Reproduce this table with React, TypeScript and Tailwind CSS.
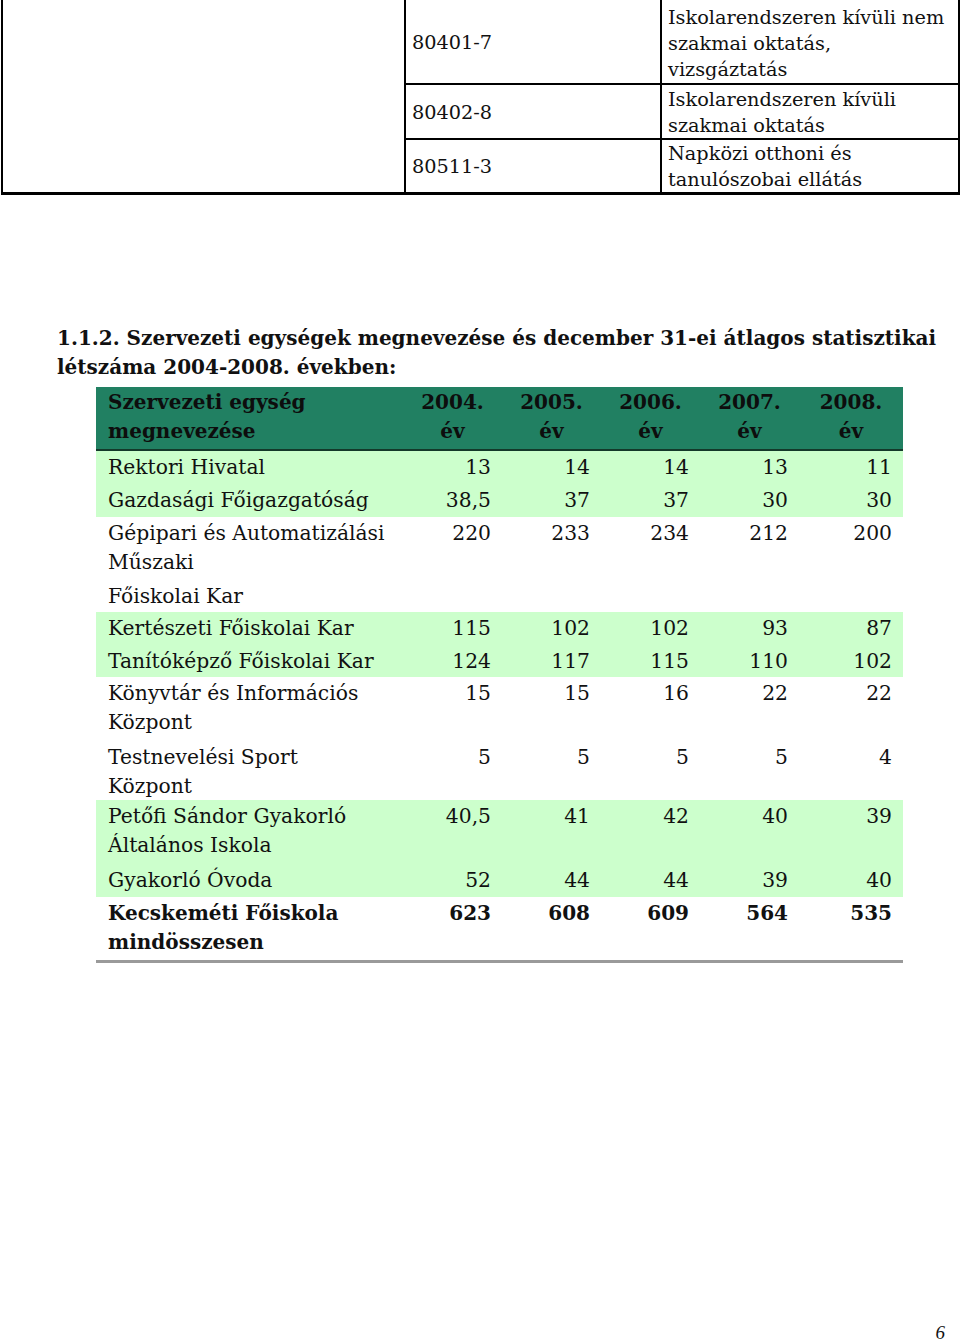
import React from "react";

type Row = {
  name: React.ReactNode;
  vals: string[];
  bg: string;
  h: string;
  bold?: boolean;
};

const rows: Row[] = [
  { name: "Rektori Hivatal", vals: ["13", "14", "14", "13", "11"], bg: "bg-[#ccffcc]", h: "h-[33px]" },
  { name: "Gazdasági Főigazgatóság", vals: ["38,5", "37", "37", "30", "30"], bg: "bg-[#ccffcc]", h: "h-[33px]" },
  {
    name: (
      <>
        Gépipari és Automatizálási
        <br />
        Műszaki
        <div className="mt-[5px]">Főiskolai Kar</div>
      </>
    ),
    vals: ["220", "233", "234", "212", "200"],
    bg: "bg-white",
    h: "h-[95px]",
  },
  { name: "Kertészeti Főiskolai Kar", vals: ["115", "102", "102", "93", "87"], bg: "bg-[#ccffcc]", h: "h-[33px]" },
  { name: "Tanítóképző Főiskolai Kar", vals: ["124", "117", "115", "110", "102"], bg: "bg-[#ccffcc]", h: "h-[32px]" },
  {
    name: (
      <>
        Könyvtár és Információs
        <br />
        Központ
      </>
    ),
    vals: ["15", "15", "16", "22", "22"],
    bg: "bg-white",
    h: "h-[64px]",
  },
  {
    name: (
      <>
        Testnevelési Sport
        <br />
        Központ
      </>
    ),
    vals: ["5", "5", "5", "5", "4"],
    bg: "bg-white",
    h: "h-[59px]",
  },
  {
    name: (
      <>
        Petőfi Sándor Gyakorló
        <br />
        Általános Iskola
      </>
    ),
    vals: ["40,5", "41", "42", "40", "39"],
    bg: "bg-[#ccffcc]",
    h: "h-[64px]",
  },
  { name: "Gyakorló Óvoda", vals: ["52", "44", "44", "39", "40"], bg: "bg-[#ccffcc]", h: "h-[33px]" },
  {
    name: (
      <>
        Kecskeméti Főiskola
        <br />
        mindösszesen
      </>
    ),
    vals: ["623", "608", "609", "564", "535"],
    bg: "bg-white",
    h: "h-[63px]",
    bold: true,
  },
];

const years = ["2004.", "2005.", "2006.", "2007.", "2008."];

export default function App() {
  return (
    <div
      className="flex h-[1343px] w-[960px] flex-col overflow-hidden bg-white text-[#111]"
      style={{ fontFamily: '"DejaVu Serif", "Liberation Serif", serif' }}
    >
      {/* Top table continuation */}
      <div className="ml-[1px] flex w-[959px] border-b-[3px] border-l-2 border-r-2 border-black text-[19.3px] leading-[26px]">
        <div className="w-[403px] border-r-2 border-black" />
        <div className="grid flex-1 grid-cols-[256px_1fr]">
          <div className="flex h-[85px] items-center border-b-2 border-r-2 border-black pl-[6px] pt-[3px]">80401-7</div>
          <div className="flex h-[85px] items-center whitespace-nowrap border-b-2 border-black pl-[6px] pt-[4px]">
            <div>
              Iskolarendszeren kívüli nem
              <br />
              szakmai oktatás,
              <br />
              vizsgáztatás
            </div>
          </div>
          <div className="flex h-[55px] items-center border-b-2 border-r-2 border-black pl-[6px] pt-[2px]">80402-8</div>
          <div className="flex h-[55px] items-center whitespace-nowrap border-b-2 border-black pl-[6px] pt-[2px]">
            <div>
              Iskolarendszeren kívüli
              <br />
              szakmai oktatás
            </div>
          </div>
          <div className="flex h-[52px] items-center border-r-2 border-black pl-[6px] pt-[2px]">80511-3</div>
          <div className="flex h-[52px] items-center whitespace-nowrap pl-[6px] pt-[2px]">
            <div>
              Napközi otthoni és
              <br />
              tanulószobai ellátás
            </div>
          </div>
        </div>
      </div>

      {/* Heading */}
      <div className="ml-[57px] mt-[129px] whitespace-nowrap text-[20px] font-bold leading-[29px]">
        1.1.2. Szervezeti egységek megnevezése és december 31-ei átlagos statisztikai
        <br />
        létszáma 2004-2008. években:
      </div>

      {/* Green table */}
      <div className="ml-[96px] mt-[5px] w-[807px] text-[20.3px] leading-[29px]">
        <div className="flex h-[64px] border-b-2 border-[#14392a] bg-[#218062] pt-[1px] text-[20px] font-bold text-[#0d0d0d]">
          <div className="w-[307px] pl-[12px]">
            Szervezeti egység
            <br />
            megnevezése
          </div>
          {years.map((y, i) => (
            <div key={y} className={`${i === 4 ? "w-[104px]" : "w-[99px]"} text-center`}>
              {y}
              <br />
              év
            </div>
          ))}
        </div>
        {rows.map((r, idx) => (
          <div key={idx} className={`flex ${r.h} ${r.bg} pt-[2px] ${r.bold ? "text-[20px] font-bold" : ""}`}>
            <div className="w-[307px] whitespace-nowrap pl-[12px]">{r.name}</div>
            {r.vals.map((v, i) => (
              <div key={i} className={`${i === 4 ? "w-[104px]" : "w-[99px]"} pr-[11px] text-right`}>
                {v}
              </div>
            ))}
          </div>
        ))}
        <div className="h-[3px] bg-[#9a9a9a]" />
      </div>

      <div className="flex-1" />
      <div className="flex justify-end pb-[1px] pr-[15px] text-[19px] italic leading-[18px]" style={{ fontFamily: '"Liberation Serif", serif' }}>
        6
      </div>
    </div>
  );
}
